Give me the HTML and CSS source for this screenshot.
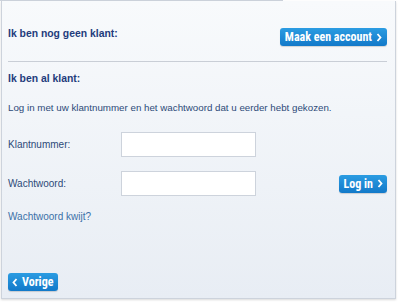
FILE: index.html
```html
<!DOCTYPE html>
<html lang="nl">
<head>
  <meta charset="UTF-8">
  <meta name="viewport" content="width=device-width, initial-scale=1.0">
  <title>Inloggen</title>
  <link rel="stylesheet" href="styles.css">
</head>
<body>
  <div class="tabline"></div>

  <div class="panel">
    <!-- Nieuwe klant -->
    <div class="row-new">
      <h2>Ik ben nog geen klant:</h2>
      <button class="btn">Maak een account
        <svg class="chev" viewBox="0 0 6 9" width="6" height="9"><path d="M1.5 1 L4.5 4.5 L1.5 8" /></svg>
      </button>
    </div>

    <hr class="sep">

    <!-- Bestaande klant -->
    <h2 class="sub">Ik ben al klant:</h2>
    <p class="intro">Log in met uw klantnummer en het wachtwoord dat u eerder hebt gekozen.</p>

    <div class="field">
      <label for="nr">Klantnummer:</label>
      <input id="nr" type="text">
    </div>

    <div class="field">
      <label for="pw">Wachtwoord:</label>
      <input id="pw" type="password">
      <button class="btn btn-login">Log in
        <svg class="chev" viewBox="0 0 6 9" width="6" height="9"><path d="M1.5 1 L4.5 4.5 L1.5 8" /></svg>
      </button>
    </div>

    <a class="forgot" href="#">Wachtwoord kwijt?</a>

    <div class="footer">
      <button class="btn btn-back">
        <svg class="chev" viewBox="0 0 6 9" width="6" height="9"><path d="M4.5 1 L1.5 4.5 L4.5 8" /></svg>
        Vorige</button>
    </div>
  </div>
</body>
</html>
```

FILE: styles.css
```css
* {
  margin: 0;
  padding: 0;
  box-sizing: border-box;
}

body {
  font-family: "Liberation Sans", Arial, sans-serif;
  background-color: #fff;
  color: #2d4a78;
  width: 400px;
  height: 302px;
  overflow: hidden;
}

/* streep van het tabblad erboven */
.tabline {
  width: 283px;
  height: 1px;
  background-color: #cdd3dc;
}

.panel {
  margin-left: 1px;
  width: 395px;
  height: 298px;
  border: 1px solid #cdd3dc;
  border-top: none;
  background: linear-gradient(to bottom, #f8fafc, #e8edf4);
  box-shadow: 0 1px 2px rgba(0, 0, 0, 0.15);
  padding: 0 8px 0 6px;
  display: flex;
  flex-direction: column;
}

h2 {
  font-size: 10.4px;
  font-weight: bold;
  color: #1f3c7c;
  line-height: 14px;
}

.row-new {
  display: flex;
  justify-content: space-between;
  align-items: flex-start;
  padding-top: 26px;
  height: 60px;
}

.row-new .btn {
  margin-top: 1px;
}

.sep {
  border: none;
  height: 1px;
  background-color: #c9ced6;
}

.sub {
  margin-top: 10px;
}

.intro {
  font-size: 9.75px;
  line-height: 14px;
  margin-top: 15px;
}

.field {
  display: flex;
  align-items: center;
  margin-top: 17px;
}

.field + .field {
  margin-top: 14px;
}

.field label {
  width: 113px;
  font-size: 10px;
}

.field input {
  width: 135px;
  height: 25px;
  border: 1px solid #cdd3dc;
  background-color: #fff;
}

/* Knoppen */
.btn {
  display: inline-flex;
  align-items: center;
  gap: 4px;
  height: 18px;
  padding: 0 5px;
  border: none;
  border-radius: 3px;
  background: linear-gradient(to bottom, #2b9ce2, #1279c9);
  color: #fff;
  font-family: "Liberation Sans Narrow", "Roboto Condensed", "Liberation Sans", sans-serif;
  font-stretch: condensed;
  font-weight: bold;
  font-size: 12px;
  cursor: pointer;
  box-shadow: 0 1px 1px rgba(0, 0, 0, 0.15);
}

.chev path {
  fill: none;
  stroke: #fff;
  stroke-width: 1.8;
}

.btn-login {
  margin-left: auto;
  padding: 0 4px 0 5px;
}

.forgot {
  margin-top: 14px;
  font-size: 10px;
  line-height: 14px;
  color: #3b70a8;
  text-decoration: none;
}

.footer {
  margin-top: auto;
  padding-bottom: 7px;
}

.btn-back {
  padding: 0 5px 0 4px;
}
```
